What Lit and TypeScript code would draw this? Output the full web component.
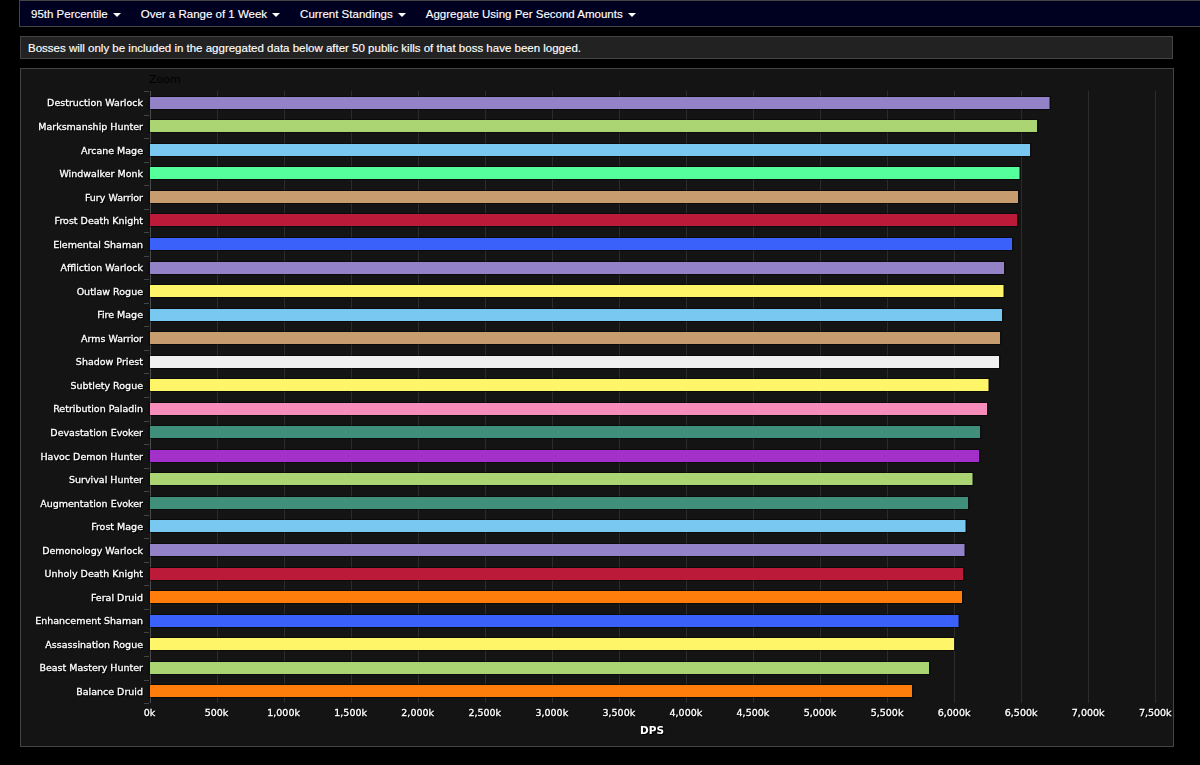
import { LitElement, html, css, svg } from "lit";
import { customElement } from "lit/decorators.js";

const C: Record<string, string> = {
  warlock: "#9482c9", hunter: "#abd473", mage: "#78c8f2", monk: "#54ff9c", warrior: "#c79c6e",
  dk: "#bb1b39", shaman: "#3a62fb", rogue: "#fff569", priest: "#f0f0f0", paladin: "#f58cba",
  evoker: "#408f7a", dh: "#a330c9", druid: "#ff7d0a",
};
const ROWS: [string, string, number][] = [
  ["Destruction Warlock", C.warlock, 1049.5], ["Marksmanship Hunter", C.hunter, 1037], ["Arcane Mage", C.mage, 1030],
  ["Windwalker Monk", C.monk, 1019.5], ["Fury Warrior", C.warrior, 1018], ["Frost Death Knight", C.dk, 1017],
  ["Elemental Shaman", C.shaman, 1012], ["Affliction Warlock", C.warlock, 1004], ["Outlaw Rogue", C.rogue, 1003.5],
  ["Fire Mage", C.mage, 1002], ["Arms Warrior", C.warrior, 1000], ["Shadow Priest", C.priest, 999],
  ["Subtlety Rogue", C.rogue, 988.5], ["Retribution Paladin", C.paladin, 987], ["Devastation Evoker", C.evoker, 980],
  ["Havoc Demon Hunter", C.dh, 979], ["Survival Hunter", C.hunter, 972.5], ["Augmentation Evoker", C.evoker, 968],
  ["Frost Mage", C.mage, 965.5], ["Demonology Warlock", C.warlock, 964.5], ["Unholy Death Knight", C.dk, 963],
  ["Feral Druid", C.druid, 962], ["Enhancement Shaman", C.shaman, 958.5], ["Assassination Rogue", C.rogue, 954],
  ["Beast Mastery Hunter", C.hunter, 929], ["Balance Druid", C.druid, 912],
];
const NAV = ["95th Percentile", "Over a Range of 1 Week", "Current Standings", "Aggregate Using Per Second Amounts"];
const X0 = 149.5, STEP = 67.05, TOP = 91, ROW = 23.54, OX = 21, OY = 69;

@customElement("app-root")
export class AppRoot extends LitElement {
  static styles = css`
    :host { display: block; width: 1200px; height: 765px; background: #000; overflow: hidden;
      font-family: "Liberation Sans", Arial, sans-serif; color: #fff; }
    .nav { display: flex; height: 27px; box-sizing: border-box; margin-left: 19px; padding-left: 11px; gap: 20px;
      align-items: center; background: #000020; border: 1px solid #444; border-right: 0; font-size: 11.5px;
      -webkit-text-stroke: .15px #fff; }
    .item { display: flex; align-items: center; gap: 5px; white-space: nowrap; }
    .caret { width: 0; height: 0; border-left: 4px solid transparent; border-right: 4px solid transparent; border-top: 4px solid #fff; margin-top: 2px; }
    .notice { margin: 9px 27px 0 20px; height: 23px; box-sizing: border-box; padding-left: 7px; display: flex; align-items: center;
      background: #222; border: 1px solid #444; font-size: 11.5px; -webkit-text-stroke: .15px #fff; }
    .panel { margin: 9px 26px 0 20px; height: 679px; box-sizing: border-box; background: #141414; border: 1px solid #444; }
    svg { display: block; }
    .lbl { font: 9.5px "DejaVu Sans", sans-serif; fill: #fff; stroke: #fff; stroke-width: .3px; filter: drop-shadow(1px 1px 0 #000); }
    .zoom { font: 11px "DejaVu Sans", sans-serif; fill: #000; }
    .dps { font: bold 10.5px "DejaVu Sans", sans-serif; fill: #fff; filter: drop-shadow(1px 1px 0 #000); }
  `;

  render() {
    const bottom = TOP + ROW * ROWS.length;
    return html`
      <div class="nav">${NAV.map((n) => html`<div class="item">${n}<span class="caret"></span></div>`)}</div>
      <div class="notice">Bosses will only be included in the aggregated data below after 50 public kills of that boss have been logged.</div>
      <div class="panel">
        <svg width="1151" height="677" viewBox="${OX} ${OY} 1151 677">
          <text class="zoom" x="149" y="83">Zoom</text>
          ${Array.from({ length: 16 }, (_, i) => {
            const x = Math.round(X0 + STEP * i) + 0.5;
            return svg`<line x1=${x} x2=${x} y1=${TOP} y2=${bottom} stroke=${i === 0 ? "#4a4a4a" : "#2c2c2c"}></line>
              <text class="lbl" x=${X0 + STEP * i} y="716" text-anchor="middle">${(i * 500).toLocaleString("en-US")}k</text>`;
          })}
          ${ROWS.map(([name, color, end], i) => {
            const cy = TOP + ROW * (i + 0.5);
            const y = Math.round(cy - 6);
            const tick = Math.round(TOP + ROW * i) + 0.5;
            return svg`<line x1="144" x2="149" y1=${tick} y2=${tick} stroke="#444"></line>
              <rect x="149" y=${y - 0.5} width=${end - 149 + 1} height="13" fill="none" stroke="#000" stroke-opacity=".45"></rect>
              <rect x="150" y=${y} width=${end - 150} height="12" fill=${color}></rect>
              <text class="lbl" x="143" y=${cy + 3.7} text-anchor="end">${name}</text>`;
          })}
          <line x1="144" x2="149" y1=${Math.round(bottom) + 0.5} y2=${Math.round(bottom) + 0.5} stroke="#444"></line>
          <text class="dps" x="652" y="734" text-anchor="middle">DPS</text>
        </svg>
      </div>
    `;
  }
}
